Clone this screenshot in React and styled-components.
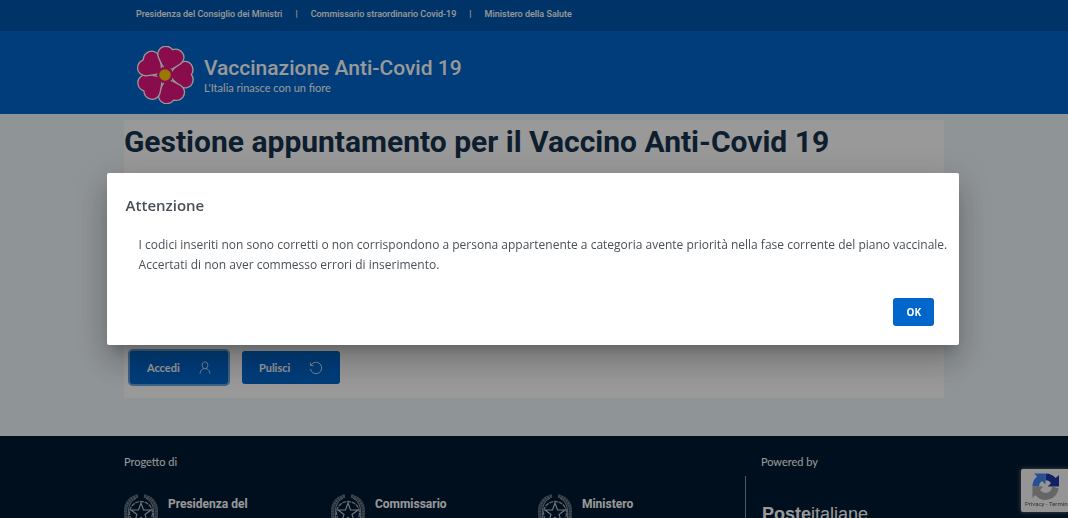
import React, { useState } from "react";
import styled, { createGlobalStyle } from "styled-components";

const GlobalStyle = createGlobalStyle`
  * {
    box-sizing: border-box;
  }
  body {
    margin: 0;
    background-color: #eff7fb;
    font-family: Roboto, "Liberation Sans", sans-serif;
  }
  a {
    color: inherit;
    text-decoration: none;
  }
`;

const Page = styled.div`
  height: 100vh;
  overflow: hidden;
`;

const Container = styled.div`
  width: 76.8%;
  margin: 0 auto;
`;

const SlimHeader = styled.nav`
  background-color: #0057ad;
  color: white;
`;

const SlimLinks = styled(Container)`
  display: flex;
  align-items: center;
  height: 31px;
  padding: 0 12px 4px;
`;

const SlimLink = styled.a`
  font-size: 9px;
  font-weight: 500;
  & + & {
    margin-left: 13px;
  }
  & + &::before {
    content: "|";
    margin-right: 13px;
  }
`;

const Header = styled.header`
  background-color: #0066cc;
  color: white;
`;

const Brand = styled(Container)`
  display: flex;
  align-items: center;
  gap: 10px;
  height: 83px;
  padding: 5px 12px 0;
`;

const Tagline = styled.div`
  font-family: Lato, sans-serif;
  font-size: 11px;
  line-height: 14px;
`;

const SiteName = styled.div`
  font-size: 21px;
  font-weight: 500;
  line-height: 26px;
`;

const Card = styled(Container)`
  margin: 6px auto 38px;
  padding-bottom: 14px;
  background-color: white;
`;

const Title = styled.h1`
  margin: 0;
  font-size: 30px;
  font-weight: 700;
  line-height: 44px;
  color: #17324d;
  white-space: nowrap;
`;

const Actions = styled.div`
  display: flex;
  gap: 14px;
  margin-top: 187px;
  padding-left: 6px;
`;

const Button = styled.button`
  display: flex;
  align-items: center;
  justify-content: space-between;
  width: 98px;
  height: 33px;
  padding: 0 17px;
  border: none;
  border-radius: 3px;
  background-color: #0066cc;
  color: white;
  font-family: Lato, sans-serif;
  font-size: 11px;
  font-weight: 700;
  cursor: pointer;
  box-shadow: ${(props) => props.$focused && "0 0 0 2px #6aa3dc"};
`;

const Footer = styled.footer`
  background-color: #001a33;
  color: white;
`;

const FooterInner = styled(Container)`
  display: grid;
  grid-template-columns: 621px 1fr;
  padding-top: 18px;
`;

const Label = styled.div`
  font-family: Lato, sans-serif;
  font-size: 11px;
  line-height: 16px;
`;

const Partners = styled.div`
  display: grid;
  grid-template-columns: repeat(3, 1fr);
  margin-top: 24px;
`;

const Partner = styled.a`
  display: flex;
  gap: 10px;
  font-size: 12px;
  font-weight: 700;
  line-height: 20px;
`;

const Powered = styled.div`
  padding-left: 16px;
`;

const Divided = styled.div`
  margin: 6px 0 0 -16px;
  padding: 27px 0 40px 16px;
  border-left: 1px solid #8a95a0;
`;

const Poste = styled.a`
  font-family: "Liberation Sans", Arial, sans-serif;
  font-size: 18px;
  line-height: 22px;
`;

const Captcha = styled.div`
  position: fixed;
  right: 0;
  bottom: 6px;
  width: 47px;
  height: 43px;
  padding: 4px 0 0 4px;
  overflow: hidden;
  border-radius: 2px 0 0 2px;
  background-color: #f9f9f9;
  box-shadow: 0 0 4px gray;
  color: #555;
  font-size: 6px;
  line-height: 8px;
  white-space: nowrap;
  svg {
    display: block;
    margin-left: 7px;
  }
`;

const Backdrop = styled.div`
  position: fixed;
  inset: 0;
  display: flex;
  align-items: center;
  justify-content: center;
  padding-right: 2px;
  background-color: rgba(0, 0, 0, 0.4);
`;

const Dialog = styled.div`
  width: 80%;
  padding: 19px 0 19px 19px;
  border-radius: 2px;
  background-color: white;
  color: #495057;
  font-family: "Open Sans", "Noto Sans", sans-serif;
  box-shadow: 0 9px 12px -5px rgba(0, 0, 0, 0.2),
    0 19px 30px 2px rgba(0, 0, 0, 0.14), 0 7px 36px 6px rgba(0, 0, 0, 0.12);
`;

const DialogTitle = styled.h2`
  margin: 0;
  font-size: 15px;
  font-weight: 600;
  line-height: 26px;
`;

const DialogText = styled.p`
  margin: 17px 0 23px;
  padding-left: 13px;
  font-size: 12px;
  line-height: 20px;
`;

const DialogActions = styled.div`
  display: flex;
  justify-content: flex-end;
  padding-right: 25px;
`;

const OkButton = styled.button`
  width: 41px;
  height: 28px;
  padding: 0;
  border: none;
  border-radius: 3px;
  background-color: #0066cc;
  color: white;
  font-family: inherit;
  font-size: 10px;
  font-weight: 700;
  cursor: pointer;
`;

const Flower = () => (
  <svg width="58" height="58" viewBox="-29 -29 58 58" aria-hidden="true">
    {[-1, 71, 143, 215, 287].map((angle) => (
      <path
        key={angle}
        transform={`rotate(${angle})`}
        d="M4 0C8 -6 11 -8.500 15 -11.500C19 -14.500 24 -13.500 26.500 -10C29 -6 28.500 -3 26.500 0C28.500 3 29 6 26.500 10C24 13.500 19 14.500 15 11.500C11 8.500 8 6 4 0Z"
        fill="#e5177f"
        stroke="white"
        strokeWidth="1.3"
      />
    ))}
    <circle r="8" fill="#e5177f" />
    <circle r="5.800" fill="#ffc800" />
  </svg>
);

const Emblem = () => (
  <svg width="34" height="38" viewBox="0 0 34 38" fill="none" stroke="#c3c9cf" aria-hidden="true">
    <path
      d="M14 2C3 4-1 15 3 27M20 2C31 4 35 15 31 27"
      strokeWidth="3.500"
      strokeDasharray="2.500 0.400"
      opacity="0.5"
    />
    <path d="M12 4C5 8 3 15 5 27M22 4C29 8 31 15 29 27" strokeWidth="0.8" />
    <circle cx="17" cy="19" r="11.500" strokeWidth="1.3" strokeDasharray="4 0.800" opacity="0.8" />
    <path d="M17 9L19.500 16H27L21 20.500L23.500 28L17 23.500L10.500 28L13 20.500L7 16H14.500Z" strokeWidth="1.1" />
  </svg>
);

const UserIcon = () => (
  <svg width="12" height="14" viewBox="0 0 12 14" fill="none" stroke="white" strokeWidth="0.8" aria-hidden="true">
    <path d="M6 1C4 1 3 2.400 3.200 4.300C3.400 6.400 4.500 7.800 6 7.800S8.600 6.400 8.800 4.300C9 2.400 8 1 6 1ZM4.600 7.600C2.500 8.400 1.400 10 1 12.600M7.400 7.600C9.500 8.400 10.600 10 11 12.600" />
  </svg>
);

const ResetIcon = () => (
  <svg width="14" height="14" viewBox="0 0 14 14" fill="none" stroke="white" strokeWidth="0.8" aria-hidden="true">
    <path d="M2 4.200A5.700 5.700 0 1 1 1.400 8M1.400 1.500V4.600H4.600" />
  </svg>
);

const CaptchaLogo = () => (
  <svg width="27" height="27" viewBox="0 0 64 64" aria-hidden="true">
    <path d="M64 32V5L56 12A31 31 0 0 0 32 1V17C39 17 42 20 45 24L37 32Z" fill="#1c3aa9" />
    <path d="M32 1H5L12 8A31 31 0 0 0 1 32H17C17 25 20 22 24 19L32 27Z" fill="#4285f4" />
    <path d="M1 32V59L8 52A31 31 0 0 0 63 36L48 32C46 40 42 47 33 47C27 47 23 44 19 40L27 32Z" fill="#ababab" />
  </svg>
);

const institutions = ["Presidenza del Consiglio dei Ministri", "Commissario straordinario Covid-19", "Ministero della Salute"];
const partners = ["Presidenza del", "Commissario", "Ministero"];

const App = () => {
  const [open, setOpen] = useState(true);
  return (
    <Page>
      <GlobalStyle />
      <SlimHeader>
        <SlimLinks>
          {institutions.map((name) => (
            <SlimLink href="#" key={name}>{name}</SlimLink>
          ))}
        </SlimLinks>
      </SlimHeader>
      <Header>
        <Brand>
          <Flower />
          <div>
            <SiteName>Vaccinazione Anti-Covid 19</SiteName>
            <Tagline>L'Italia rinasce con un fiore</Tagline>
          </div>
        </Brand>
      </Header>
      <Card as="main">
        <Title>Gestione appuntamento per il Vaccino Anti-Covid 19</Title>
        <Actions>
          <Button $focused>
            Accedi
            <UserIcon />
          </Button>
          <Button>
            Pulisci
            <ResetIcon />
          </Button>
        </Actions>
      </Card>
      <Footer>
        <FooterInner>
          <div>
            <Label>Progetto di</Label>
            <Partners>
              {partners.map((name) => (
                <Partner href="#" key={name}>
                  <Emblem />
                  {name}
                </Partner>
              ))}
            </Partners>
          </div>
          <Powered>
            <Label>Powered by</Label>
            <Divided>
              <Poste href="#"><b>Poste</b>italiane</Poste>
            </Divided>
          </Powered>
        </FooterInner>
      </Footer>
      <Captcha>
        <CaptchaLogo />
        Privacy - Termini
      </Captcha>
      {open && (
        <Backdrop>
          <Dialog role="alertdialog" aria-labelledby="dialog-title">
            <DialogTitle id="dialog-title">Attenzione</DialogTitle>
            <DialogText>
              I codici inseriti non sono corretti o non corrispondono a persona appartenente a categoria avente priorità nella fase corrente del piano vaccinale.
              <br />
              Accertati di non aver commesso errori di inserimento.
            </DialogText>
            <DialogActions>
              <OkButton onClick={() => setOpen(false)}>OK</OkButton>
            </DialogActions>
          </Dialog>
        </Backdrop>
      )}
    </Page>
  );
};

export default App;
